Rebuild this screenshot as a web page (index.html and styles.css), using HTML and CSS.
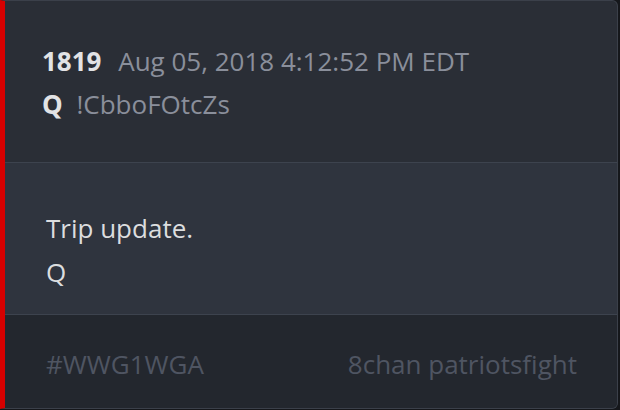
FILE: index.html
```html
<!DOCTYPE html>
<html>
<head>
    <title>Q Drop 1819</title>
    <link rel="stylesheet" href="styles.css">
</head>
<body>
    <div class="post">
        <div class="post-header">
            <div class="meta-line">
                <span class="post-number">1819</span>
                <span class="post-date">Aug 05, 2018 4:12:52 PM EDT</span>
            </div>
            <div class="meta-line">
                <span class="post-author">Q</span>
                <span class="post-trip">!CbboFOtcZs</span>
            </div>
        </div>

        <div class="post-body">
            <p>Trip update.</p>
            <p>Q</p>
        </div>

        <div class="post-footer">
            <span class="tag">#WWG1WGA</span>
            <span class="source">8chan patriotsfight</span>
        </div>
    </div>
</body>
</html>
```

FILE: styles.css
```css
body {
    margin: 0;
    padding: 0;
    background: #15171b;
    font-family: "Open Sans", "Noto Sans", sans-serif;
    overflow: hidden;
}

.post {
    width: 618px;
    height: 409px;
    box-sizing: border-box;
    border: 1px solid #3b404a;
    border-left: 5px solid #d70000;
    border-radius: 0 6px 6px 0;
    background: #2a2e36;
    display: flex;
    flex-direction: column;
    overflow: hidden;
}

.post-header {
    padding: 39px 37px 0;
    height: 162px;
    flex-shrink: 0;
    box-sizing: border-box;
    border-bottom: 1px solid #3d434e;
}

.meta-line {
    font-size: 26px;
    line-height: 43px;
    white-space: nowrap;
}

.post-number,
.post-author {
    color: #e2e3e5;
    font-weight: 700;
}

.post-number {
    margin-right: 10px;
}

.post-author {
    margin-right: 7px;
}

.post-date,
.post-trip {
    color: #8a8f9b;
}

.post-body {
    background: #2f343e;
    height: 152px;
    flex-shrink: 0;
    box-sizing: border-box;
    padding: 43px 41px 0;
    border-bottom: 1px solid #3d434e;
    color: #dcdddf;
    font-size: 26px;
    line-height: 44px;
}

.post-body p {
    margin: 0;
}

.post-footer {
    flex: 1;
    background: #23272e;
    display: flex;
    justify-content: space-between;
    align-items: flex-start;
    padding: 31px 40px 0 41px;
    font-size: 26px;
    color: #4f5562;
}
```
